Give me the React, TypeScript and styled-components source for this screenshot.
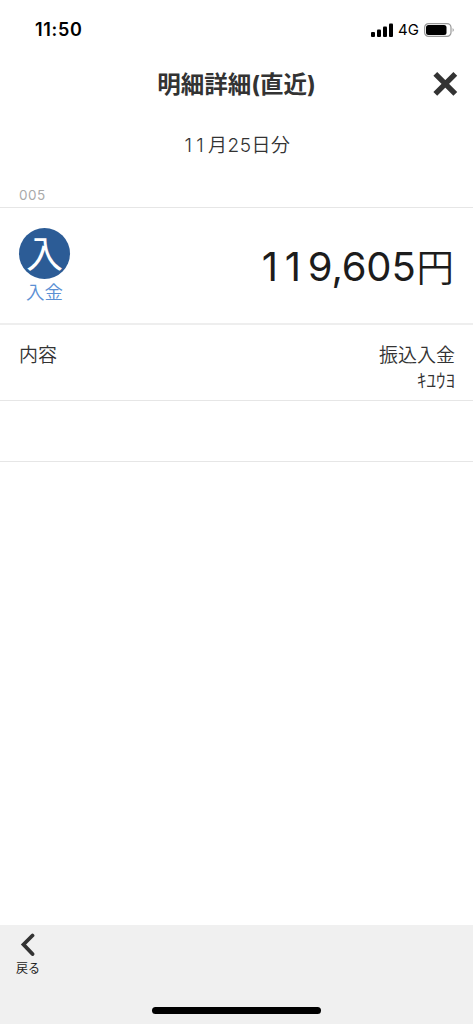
import React from "react";
import styled, { createGlobalStyle } from "styled-components";

const Global = createGlobalStyle`
  * { box-sizing: border-box; }
  html, body { margin: 0; background: #fff; }
`;
const Screen = styled.div`
  width: 473px;
  height: 1024px;
  display: flex;
  flex-direction: column;
  background: #fff;
  color: #333;
  overflow: hidden;
  font-family: Inter, "Noto Sans CJK JP", sans-serif;
`;
const StatusBar = styled.div`
  height: 59px;
  flex: none;
  display: flex;
  align-items: center;
  justify-content: space-between;
  padding: 0 18px 0 35px;
  color: #000;
`;
const Clock = styled.span`
  font-size: 18px;
  font-weight: 600;
  letter-spacing: 0.7px;
`;
const Indicators = styled.div`
  display: flex;
  align-items: center;
  gap: 5px;
  font-size: 15px;
  font-weight: 400;
`;
const Header = styled.header`
  height: 51px;
  flex: none;
  display: grid;
  grid-template-columns: 48px 1fr 48px;
  align-items: center;
`;
const Title = styled.h1`
  margin: 0;
  text-align: center;
  font-size: 23.5px;
  line-height: 30px;
  font-weight: 700;
  color: #333;
`;
const IconButton = styled.button`
  border: 0;
  background: none;
  padding: 0;
  display: flex;
  cursor: pointer;
`;
const DateLine = styled.div`
  height: 70px;
  flex: none;
  padding-left: 2px;
  text-align: center;
  font-size: 19px;
  line-height: 72px;
  font-weight: 350;
  letter-spacing: 0.5px;
`;
const WideDigits = styled.span<{ $gap: number }>`
  letter-spacing: ${(p) => p.$gap}px;
  font-kerning: none;
`;
const Serial = styled.div`
  height: 28px;
  flex: none;
  padding-left: 19px;
  font-size: 13.5px;
  line-height: 31px;
  letter-spacing: 0.5px;
  color: #aaa;
  border-bottom: 1px solid #e6e6e6;
`;
const AmountRow = styled.section`
  height: 117px;
  flex: none;
  display: flex;
  justify-content: space-between;
  align-items: flex-start;
  padding: 20px 19px 0;
  border-bottom: 2px solid #eee;
`;
const Kind = styled.div`
  display: flex;
  flex-direction: column;
  align-items: center;
  font-size: 18.5px;
  font-weight: 350;
  line-height: 26px;
  color: #5b90d4;
`;
const Badge = styled.div`
  width: 51px;
  height: 51px;
  border-radius: 50%;
  background: #2c5c96;
  color: #fff;
  font-size: 37px;
  font-weight: 400;
  line-height: 54px;
  text-align: center;
`;
const Amount = styled.div`
  display: flex;
  align-items: baseline;
  padding-top: 14px;
  font-size: 40px;
  line-height: 50px;
  font-weight: 400;
  letter-spacing: -0.2px;
  color: #1c1c1c;
`;
const Currency = styled.span`
  margin-left: 1px;
  font-size: 37.5px;
  font-weight: 350;
  letter-spacing: 0;
`;
const DetailRow = styled.section`
  height: 76px;
  flex: none;
  display: flex;
  justify-content: space-between;
  padding: 18px 18px 0 19px;
  font-size: 19px;
  font-weight: 350;
  line-height: 26px;
  border-bottom: 1px solid #e6e6e6;
`;
const Values = styled.div`
  text-align: right;
`;
const EmptyRow = styled.div`
  height: 61px;
  flex: none;
  border-bottom: 1px solid #e6e6e6;
`;
const Spacer = styled.div`
  flex: 1;
`;
const Footer = styled.footer`
  height: 99px;
  flex: none;
  background: #f0f0f0;
  display: flex;
  flex-direction: column;
  justify-content: space-between;
  padding: 8px 0 10px 16px;
`;
const BackButton = styled.button`
  border: 0;
  background: none;
  padding: 0;
  width: 24px;
  display: flex;
  flex-direction: column;
  align-items: center;
  gap: 3px;
  font: inherit;
  font-size: 12px;
  line-height: 18px;
  color: #222;
  white-space: nowrap;
`;
const HomeBar = styled.div`
  width: 169px;
  height: 7px;
  border-radius: 3.5px;
  background: #000;
  margin-left: 136px;
`;

export default function App() {
  return (
    <Screen>
      <Global />
      <StatusBar>
        <Clock>11:50</Clock>
        <Indicators>
          <svg width="22" height="14" viewBox="0 0 22 14">
            <rect x="0" y="9" width="4" height="5" rx="1" />
            <rect x="6" y="6.5" width="4" height="7.5" rx="1" />
            <rect x="12" y="3.5" width="4" height="10.5" rx="1" />
            <rect x="18" y="0.5" width="4" height="13.5" rx="1" />
          </svg>
          4G
          <svg width="31" height="14" viewBox="0 0 31 14">
            <rect x=".6" y=".6" width="26.4" height="12.8" rx="4" fill="none" stroke="#999" strokeWidth="1.2" />
            <rect x="2" y="2" width="20.5" height="10" rx="2.5" />
            <path d="M28.6 5v4q2.4-2 0-4" fill="#999" />
          </svg>
        </Indicators>
      </StatusBar>
      <Header>
        <span />
        <Title>明細詳細(直近)</Title>
        <IconButton aria-label="閉じる">
          <svg width="40" height="30" viewBox="0 0 40 30">
            <path d="M10.3 3.8L30.3 23.8M30.3 3.8L10.3 23.8" stroke="#333" strokeWidth="5.4" />
          </svg>
        </IconButton>
      </Header>
      <DateLine>
        <WideDigits $gap={4.3}>11</WideDigits>月25日分
      </DateLine>
      <Serial>005</Serial>
      <AmountRow>
        <Kind>
          <Badge>入</Badge>
          入金
        </Kind>
        <Amount>
          <WideDigits $gap={6.8}>11</WideDigits>9,605<Currency>円</Currency>
        </Amount>
      </AmountRow>
      <DetailRow>
        <span>内容</span>
        <Values>
          <div>振込入金</div>
          <div>ｷﾕｳﾖ</div>
        </Values>
      </DetailRow>
      <EmptyRow />
      <Spacer />
      <Footer>
        <BackButton>
          <svg width="24" height="24" viewBox="0 0 24 24" fill="none">
            <path d="M16.5 2.5L7.5 11.5L16.5 21" stroke="#333" strokeWidth="3.8" strokeLinecap="round" />
          </svg>
          戻る
        </BackButton>
        <HomeBar />
      </Footer>
    </Screen>
  );
}
